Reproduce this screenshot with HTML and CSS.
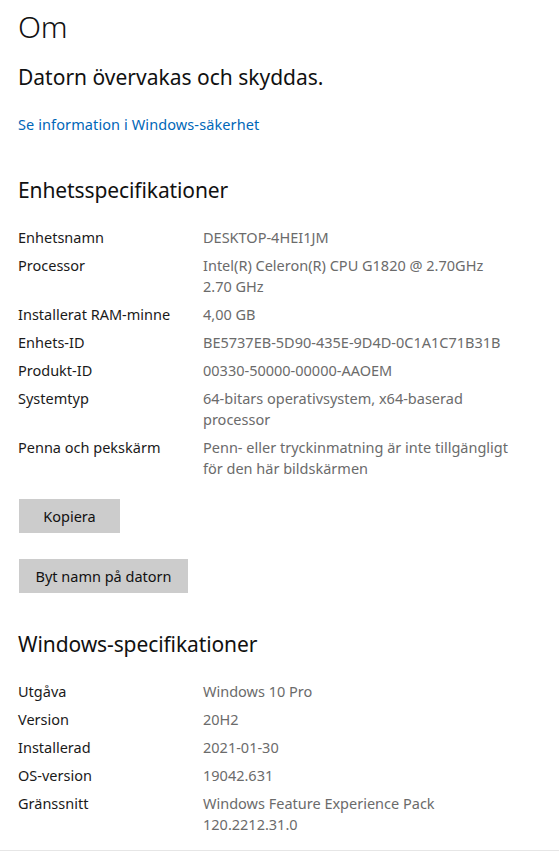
FILE: index.html
```html
<!DOCTYPE html>
<html lang="sv">
<head>
    <meta charset="UTF-8">
    <meta name="viewport" content="width=device-width, initial-scale=1.0">
    <title>Om</title>
    <link rel="stylesheet" href="styles.css">
</head>
<body>
    <div class="page">
        <h1 class="title">Om</h1>
        <p class="status">Datorn övervakas och skyddas.</p>
        <a class="link" href="#">Se information i Windows-säkerhet</a>

        <h2 class="section-title">Enhetsspecifikationer</h2>
        <div class="specs">
            <div class="spec-row">
                <div class="spec-label">Enhetsnamn</div>
                <div class="spec-value">DESKTOP-4HEI1JM</div>
            </div>
            <div class="spec-row">
                <div class="spec-label">Processor</div>
                <div class="spec-value">Intel(R) Celeron(R) CPU G1820 @ 2.70GHz<br>2.70 GHz</div>
            </div>
            <div class="spec-row">
                <div class="spec-label">Installerat RAM-minne</div>
                <div class="spec-value">4,00 GB</div>
            </div>
            <div class="spec-row">
                <div class="spec-label">Enhets-ID</div>
                <div class="spec-value">BE5737EB-5D90-435E-9D4D-0C1A1C71B31B</div>
            </div>
            <div class="spec-row">
                <div class="spec-label">Produkt-ID</div>
                <div class="spec-value">00330-50000-00000-AAOEM</div>
            </div>
            <div class="spec-row">
                <div class="spec-label">Systemtyp</div>
                <div class="spec-value">64-bitars operativsystem, x64-baserad<br>processor</div>
            </div>
            <div class="spec-row">
                <div class="spec-label">Penna och pekskärm</div>
                <div class="spec-value">Penn- eller tryckinmatning är inte tillgängligt<br>för den här bildskärmen</div>
            </div>
        </div>

        <div class="actions">
            <button class="btn btn-copy">Kopiera</button>
            <button class="btn btn-rename">Byt namn på datorn</button>
        </div>

        <h2 class="section-title section-windows">Windows-specifikationer</h2>
        <div class="specs">
            <div class="spec-row">
                <div class="spec-label">Utgåva</div>
                <div class="spec-value">Windows 10 Pro</div>
            </div>
            <div class="spec-row">
                <div class="spec-label">Version</div>
                <div class="spec-value">20H2</div>
            </div>
            <div class="spec-row">
                <div class="spec-label">Installerad</div>
                <div class="spec-value">2021-01-30</div>
            </div>
            <div class="spec-row">
                <div class="spec-label">OS-version</div>
                <div class="spec-value">19042.631</div>
            </div>
            <div class="spec-row">
                <div class="spec-label">Gränssnitt</div>
                <div class="spec-value">Windows Feature Experience Pack<br>120.2212.31.0</div>
            </div>
        </div>
    </div>
    <div class="bottom-line"></div>
</body>
</html>
```

FILE: styles.css
```css
body {
    font-family: "Noto Sans", "Open Sans", sans-serif;
    margin: 0;
    padding: 0;
    background: #ffffff;
    color: #111111;
    height: 854px;
    overflow: hidden;
    display: flex;
    flex-direction: column;
}

.page {
    padding: 7px 18px 0 18px;
    display: flex;
    flex-direction: column;
    align-items: flex-start;
    flex: 1;
}

.title {
    margin: 0;
    font-size: 30px;
    font-weight: 300;
    line-height: 40px;
    letter-spacing: -0.3px;
}

.status {
    margin: 16px 0 0 0;
    font-size: 21px;
    font-weight: 400;
    line-height: 28px;
}

.link {
    margin-top: 23px;
    font-size: 14.5px;
    line-height: 20px;
    color: #0067b8;
    text-decoration: none;
    letter-spacing: 0.1px;
}

.section-title {
    margin: 41px 0 0 0;
    font-size: 21px;
    font-weight: 400;
    line-height: 30px;
    letter-spacing: -0.1px;
}

.section-windows {
    margin-top: 36px;
}

.specs {
    margin-top: 22px;
    display: flex;
    flex-direction: column;
    gap: 7px;
}

.spec-row {
    display: grid;
    grid-template-columns: 185px 330px;
    font-size: 14.5px;
    line-height: 21px;
}

.spec-label {
    color: #1a1a1a;
}

.spec-value {
    color: #6b6b6b;
}

.actions {
    margin-top: 20px;
    display: flex;
    flex-direction: column;
    align-items: flex-start;
    gap: 26px;
}

.btn {
    font-family: inherit;
    font-size: 14.5px;
    color: #111111;
    background-color: #cccccc;
    border: none;
    height: 34px;
    padding: 0;
    margin-left: 1px;
}

.btn-copy {
    width: 101px;
}

.btn-rename {
    width: 169px;
}

.bottom-line {
    height: 3px;
    border-top: 1px solid #e6e6e6;
}
```
